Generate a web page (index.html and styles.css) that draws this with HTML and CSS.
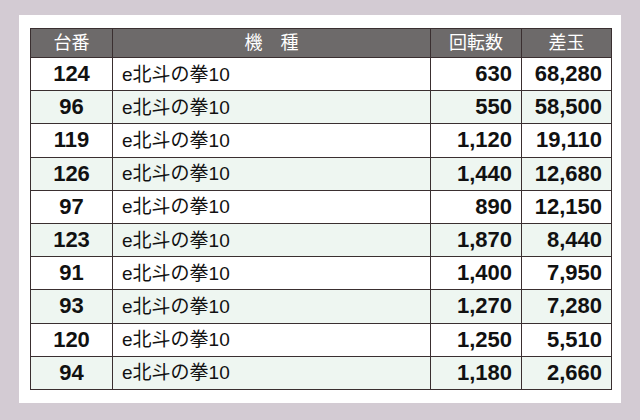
FILE: index.html
```html
<!DOCTYPE html>
<html lang="ja">
<head>
<meta charset="utf-8">
<title>台番データ</title>
<link rel="stylesheet" href="styles.css">
</head>
<body>
<div class="panel">
<table class="data">
<colgroup>
<col class="c-no"><col class="c-name"><col class="c-spin"><col class="c-diff">
</colgroup>
<thead>
<tr><th>台番</th><th>機　種</th><th>回転数</th><th>差玉</th></tr>
</thead>
<tbody>
<tr><td class="no">124</td><td class="name">e北斗の拳10</td><td class="num">630</td><td class="num">68,280</td></tr>
<tr class="alt"><td class="no">96</td><td class="name">e北斗の拳10</td><td class="num">550</td><td class="num">58,500</td></tr>
<tr><td class="no">119</td><td class="name">e北斗の拳10</td><td class="num">1,120</td><td class="num">19,110</td></tr>
<tr class="alt"><td class="no">126</td><td class="name">e北斗の拳10</td><td class="num">1,440</td><td class="num">12,680</td></tr>
<tr><td class="no">97</td><td class="name">e北斗の拳10</td><td class="num">890</td><td class="num">12,150</td></tr>
<tr class="alt"><td class="no">123</td><td class="name">e北斗の拳10</td><td class="num">1,870</td><td class="num">8,440</td></tr>
<tr><td class="no">91</td><td class="name">e北斗の拳10</td><td class="num">1,400</td><td class="num">7,950</td></tr>
<tr class="alt"><td class="no">93</td><td class="name">e北斗の拳10</td><td class="num">1,270</td><td class="num">7,280</td></tr>
<tr><td class="no">120</td><td class="name">e北斗の拳10</td><td class="num">1,250</td><td class="num">5,510</td></tr>
<tr class="alt"><td class="no">94</td><td class="name">e北斗の拳10</td><td class="num">1,180</td><td class="num">2,660</td></tr>
</tbody>
</table>
</div>
</body>
</html>
```

FILE: styles.css
```css
html, body {
  margin: 0;
  padding: 0;
}
body {
  background: #d3cbd3;
  font-family: "Liberation Sans", "Noto Sans CJK JP", sans-serif;
  width: 640px;
  height: 420px;
  overflow: hidden;
}
.panel {
  background: #ffffff;
  margin: 15px 0 0 19px;
  width: 602px;
  height: 388px;
  box-sizing: border-box;
  padding: 13px 10px 0 11px;
}
.data {
  border-collapse: collapse;
  width: 581px;
  table-layout: fixed;
}
.c-no { width: 82px; }
.c-name { width: 318px; }
.c-spin { width: 91px; }
.c-diff { width: 90px; }
.data th, .data td {
  border: 1px solid #3a2f30;
  padding: 0;
}
.data th {
  background: #6d6a6a;
  color: #ffffff;
  font-weight: normal;
  font-size: 18px;
  height: 28px;
  text-align: center;
  line-height: 1;
}
.data td {
  height: 32.2px;
  color: #111111;
  line-height: 1;
}
.data tr.alt td {
  background: #eef6f1;
}
.data td.no {
  text-align: center;
  font-weight: bold;
  font-size: 22px;
}
.data td.name {
  font-size: 19px;
  padding-left: 9px;
  text-align: left;
}
.data td.num {
  text-align: right;
  font-weight: bold;
  font-size: 22px;
  padding-right: 9px;
}
```
